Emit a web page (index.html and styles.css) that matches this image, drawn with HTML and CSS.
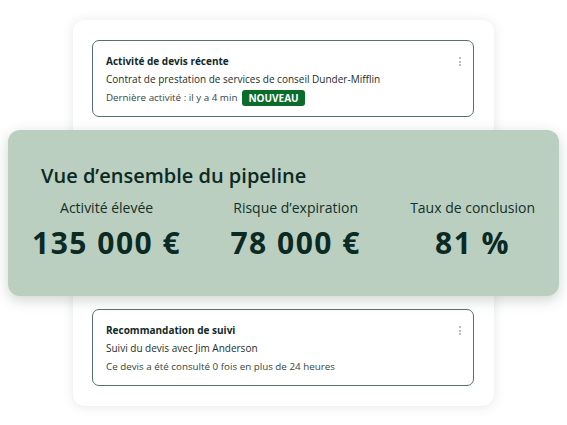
FILE: index.html
```html
<!DOCTYPE html>
<html lang="fr">
<head>
<meta charset="utf-8">
<link rel="stylesheet" href="styles.css">
</head>
<body>
<div class="stage">
  <div class="sheet">
    <div class="card">
      <div class="card-head">
        <div class="card-title">Activité de devis récente</div>
        <span class="kebab"><i></i><i></i><i></i></span>
      </div>
      <div class="card-line">Contrat de prestation de services de conseil Dunder-Mifflin</div>
      <div class="card-meta">Dernière activité : il y a 4 min <span class="badge">NOUVEAU</span></div>
    </div>

    <div class="pipeline">
      <div class="pipe-title">Vue d’ensemble du pipeline</div>
      <div class="stats">
        <div class="stat">
          <div class="stat-label">Activité élevée</div>
          <div class="stat-value">135 000 €</div>
        </div>
        <div class="stat">
          <div class="stat-label">Risque d’expiration</div>
          <div class="stat-value">78 000 €</div>
        </div>
        <div class="stat">
          <div class="stat-label">Taux de conclusion</div>
          <div class="stat-value">81 %</div>
        </div>
      </div>
    </div>

    <div class="card">
      <div class="card-head">
        <div class="card-title">Recommandation de suivi</div>
        <span class="kebab"><i></i><i></i><i></i></span>
      </div>
      <div class="card-line">Suivi du devis avec Jim Anderson</div>
      <div class="card-meta">Ce devis a été consulté 0 fois en plus de 24 heures</div>
    </div>
  </div>
</div>
</body>
</html>
```

FILE: styles.css
```css
* { box-sizing: border-box; }
html, body { margin: 0; padding: 0; background: #ffffff; }
body {
  font-family: "Open Sans", "Noto Sans", sans-serif;
  color: #1d2f2b;
  width: 567px;
  height: 425px;
  overflow: hidden;
}
.stage {
  padding-top: 20px;
  padding-left: 73px;
}
.sheet {
  width: 421px;
  background: #fff;
  border-radius: 12px;
  box-shadow: 0 1px 12px rgba(40, 60, 55, 0.12);
  padding: 20px 20px 20px 19px;
  display: flex;
  flex-direction: column;
  gap: 13px;
}
.card {
  height: 77px;
  border: 1px solid #56706b;
  border-radius: 7px;
  padding: 12px 12px 0 13px;
  display: flex;
  flex-direction: column;
}
.card-head {
  display: flex;
  justify-content: space-between;
  align-items: flex-start;
  height: 16px;
}
.card-title {
  font-weight: 700;
  font-size: 10px;
  line-height: 16px;
  color: #102925;
}
.kebab {
  display: flex;
  flex-direction: column;
  gap: 1.5px;
  padding-top: 4px;
}
.kebab i {
  display: block;
  width: 2px;
  height: 2px;
  background: #b8c0be;
}
.card-line {
  font-size: 10px;
  line-height: 18px;
  margin-top: 1px;
  color: #1b2e2a;
}
.card-meta {
  font-size: 9.8px;
  line-height: 18px;
  margin-top: 1px;
  color: #34453f;
  display: flex;
  align-items: center;
  gap: 5px;
}
.badge {
  display: inline-block;
  background: #0b6b2b;
  color: #fff;
  font-weight: 700;
  font-size: 10px;
  line-height: 16px;
  padding: 0 6px;
  border-radius: 3px;
}
.pipeline {
  margin: 0 -85px 0 -84px;
  height: 166px;
  background: #bacfc0;
  border-radius: 12px;
  box-shadow: 0 4px 14px rgba(40, 60, 55, 0.22);
  padding: 33px 24px 0 24px;
  color: #0c2a24;
}
.pipe-title {
  font-size: 20px;
  font-weight: 600;
  line-height: 26px;
  padding-left: 9px;
}
.stats {
  display: flex;
  justify-content: space-between;
  margin-top: 9px;
}
.stat {
  display: flex;
  flex-direction: column;
  align-items: center;
}
.stat-label {
  font-size: 14px;
  line-height: 20px;
  color: #12302a;
}
.stat-value {
  font-size: 30px;
  font-weight: 700;
  letter-spacing: 1.5px;
  line-height: 40px;
  margin-top: 5px;
}
```
